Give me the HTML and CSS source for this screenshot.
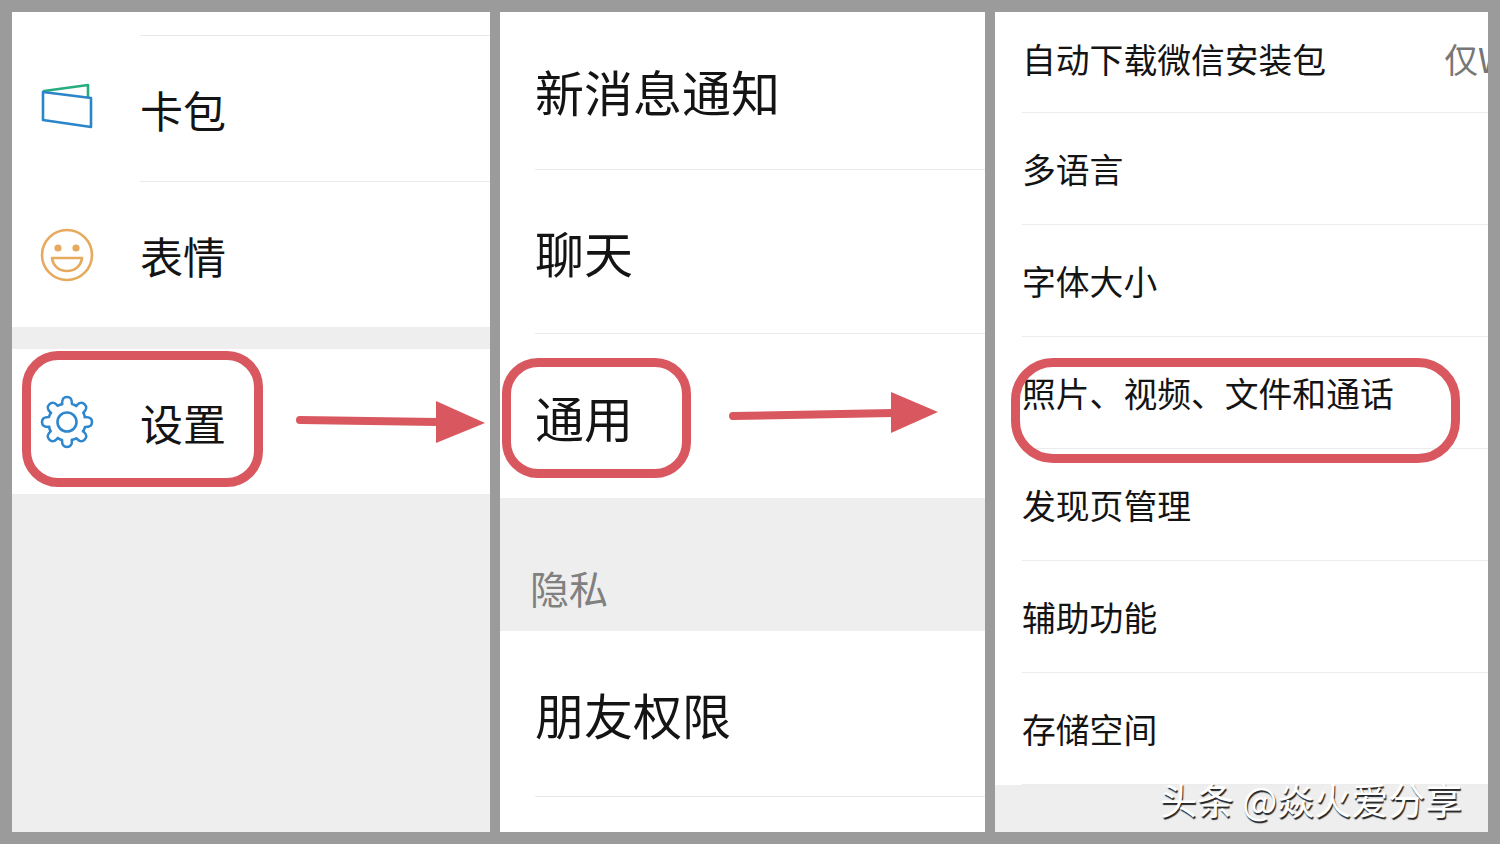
FILE: index.html
```html
<!DOCTYPE html>
<html lang="zh-CN">
<head>
    <meta charset="UTF-8">
    <meta name="viewport" content="width=device-width, initial-scale=1.0">
    <title>微信设置</title>
    <link rel="stylesheet" href="styles.css">
</head>
<body>

    <div class="stage">
        <!-- 我的 -->
        <div class="panel panel-me">
            <div class="row row-top">
                <div class="icon-cell"></div>
                <div class="row-body"></div>
            </div>
            <div class="row row-card">
                <div class="icon-cell">
                    <svg class="icon" width="60" height="60" viewBox="0 0 60 60" fill="none" stroke-width="2.6" stroke-linejoin="round" stroke-linecap="round">
                        <path d="M7 12 L51 6 V18" stroke="#25ad80"/>
                        <path d="M6 13 L54 19 V48 L6 41 Z" stroke="#2b85c9"/>
                    </svg>
                </div>
                <div class="row-body">卡包</div>
            </div>
            <div class="row row-emoji">
                <div class="icon-cell">
                    <svg class="icon" width="60" height="60" viewBox="0 0 60 60" fill="none" stroke="#e6aa5f" stroke-width="2.6" stroke-linejoin="round">
                        <circle cx="30" cy="30" r="25"/>
                        <circle cx="21" cy="23" r="3.6" fill="#e6aa5f" stroke="none"/>
                        <circle cx="39" cy="23" r="3.6" fill="#e6aa5f" stroke="none"/>
                        <path d="M15 33 H45 C44 41 38 46 30 46 C22 46 16 41 15 33 Z"/>
                    </svg>
                </div>
                <div class="row-body no-line">表情</div>
            </div>
            <div class="gap-small"></div>
            <div class="row row-settings">
                <div class="icon-cell">
                    <svg class="icon" width="60" height="60" viewBox="-30 -30 60 60" fill="none" stroke="#2f87cd" stroke-width="2.6" stroke-linejoin="round" stroke-linecap="round">
                        <g id="tooth"><path d="M-5-18 C-5-22-4.500-25 0-25 C4.500-25 5-22 5-18 Q7.500-17.500 9.200-16"/></g>
                        <use href="#tooth" transform="rotate(45)"/>
                        <use href="#tooth" transform="rotate(90)"/>
                        <use href="#tooth" transform="rotate(135)"/>
                        <use href="#tooth" transform="rotate(180)"/>
                        <use href="#tooth" transform="rotate(225)"/>
                        <use href="#tooth" transform="rotate(270)"/>
                        <use href="#tooth" transform="rotate(315)"/>
                        <circle r="9.500"/>
                    </svg>
                </div>
                <div class="row-body no-line">设置</div>
            </div>
            <div class="filler"></div>
        </div>

        <!-- 设置 -->
        <div class="panel panel-settings">
            <div class="line-row line-first">新消息通知</div>
            <div class="line-row">聊天</div>
            <div class="line-row no-line">通用</div>
            <div class="section-title">隐私</div>
            <div class="line-row line-friends">朋友权限</div>
        </div>

        <!-- 通用 -->
        <div class="panel panel-general">
            <div class="small-row small-first">
                <span>自动下载微信安装包</span>
                <span class="small-value">仅Wi-Fi网络</span>
            </div>
            <div class="small-row">多语言</div>
            <div class="small-row">字体大小</div>
            <div class="small-row">照片、视频、文件和通话</div>
            <div class="small-row">发现页管理</div>
            <div class="small-row">辅助功能</div>
            <div class="small-row">存储空间</div>
            <div class="filler"></div>
        </div>

        <!-- 标注 -->
        <div class="mark mark-1"></div>
        <div class="mark mark-2"></div>
        <div class="mark mark-3"></div>
        <svg class="arrows" width="1500" height="844" viewBox="0 0 1500 844" fill="#d9575f" stroke="#d9575f" stroke-linecap="round">
            <path d="M300 420 L438 422" stroke-width="8" fill="none"/>
            <polygon points="436,401 485,423 436,443" stroke="none"/>
            <path d="M733 416 L893 413" stroke-width="8" fill="none"/>
            <polygon points="891,392 938,412 891,433" stroke="none"/>
        </svg>
        <div class="watermark">头条 @焱火爱分享</div>
    </div>

</body>
</html>
```

FILE: styles.css
```css
body {
    margin: 0;
    background-color: #9b9b9b;
    font-family: "Noto Sans CJK SC", "Noto Sans", sans-serif;
    color: #141414;
}
.stage {
    position: relative;
    display: flex;
    gap: 10px;
    width: 1500px;
    height: 844px;
    padding: 12px;
    box-sizing: border-box;
    overflow: hidden;
}
.panel {
    height: 820px;
    background-color: white;
    display: flex;
    flex-direction: column;
    overflow: hidden;
}
.panel-me {
    width: 478px;
    font-size: 43px;
}
.panel-settings {
    width: 485px;
    font-size: 49px;
}
.panel-general {
    width: 493px;
    font-size: 33.800px;
}

/* first panel */
.row {
    display: flex;
    flex-shrink: 0;
}
.icon-cell {
    width: 128px;
    flex-shrink: 0;
    display: flex;
    align-items: center;
}
.icon {
    margin-left: 25px;
    display: block;
}
.row-body {
    flex: 1;
    display: flex;
    align-items: center;
    border-bottom: 1px solid #e9e9e9;
}
.row-body.no-line {
    border-bottom: none;
}
.row-top {
    height: 24px;
}
.row-card {
    height: 146px;
}
.row-emoji {
    height: 145px;
}
.row-settings {
    height: 145px;
}
.gap-small {
    height: 22px;
    flex-shrink: 0;
    background-color: #eeeeee;
}
.filler {
    flex: 1;
    background-color: #eeeeee;
}

/* second panel */
.line-row {
    height: 164px;
    margin-left: 35px;
    flex-shrink: 0;
    box-sizing: border-box;
    display: flex;
    align-items: center;
    border-bottom: 1px solid #e9e9e9;
}
.line-row.no-line {
    border-bottom: none;
}
.line-first {
    height: 158px;
}
.line-friends {
    height: 166px;
}
.section-title {
    height: 133px;
    flex-shrink: 0;
    box-sizing: border-box;
    padding: 0 0 16px 30px;
    display: flex;
    align-items: flex-end;
    font-size: 39px;
    color: #808080;
    background-color: #eeeeee;
}

/* third panel */
.small-row {
    height: 112px;
    margin-left: 27px;
    flex-shrink: 0;
    box-sizing: border-box;
    display: flex;
    align-items: center;
    white-space: nowrap;
    border-bottom: 1px solid #ececec;
}
.small-first {
    height: 101px;
    padding-bottom: 8px;
}
.small-value {
    margin-left: 118px;
    flex-shrink: 0;
    color: #777777;
}

/* red annotations */
.mark {
    position: absolute;
    box-sizing: border-box;
    border: 9px solid #d9575f;
    border-radius: 36px;
}
.mark-1 {
    left: 22px;
    top: 351px;
    width: 241px;
    height: 136px;
}
.mark-2 {
    left: 502px;
    top: 358px;
    width: 189px;
    height: 120px;
}
.mark-3 {
    left: 1011px;
    top: 358px;
    width: 449px;
    height: 105px;
    border-radius: 42px;
}
.arrows {
    position: absolute;
    left: 0;
    top: 0;
}
.watermark {
    position: absolute;
    left: 1160px;
    top: 774px;
    font-size: 37px;
    line-height: 50px;
    white-space: nowrap;
    color: white;
    text-shadow: 1px 2px 1px #222222;
}
```
